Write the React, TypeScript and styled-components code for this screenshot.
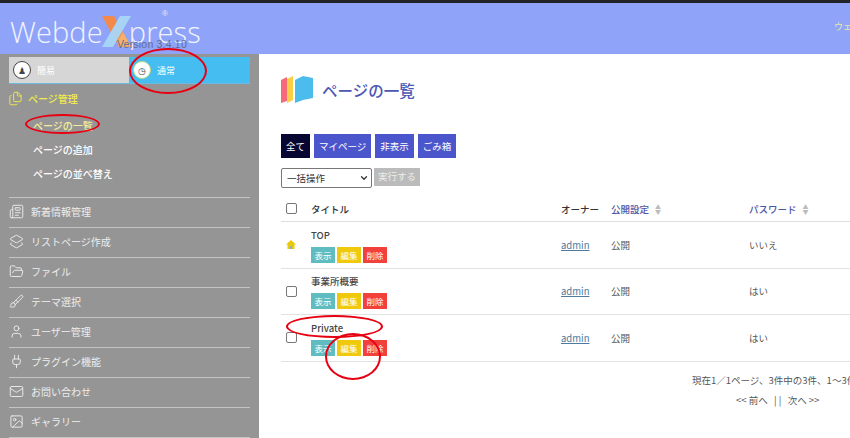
import React from "react";
import styled, { createGlobalStyle } from "styled-components";
import {
  Files,
  Newspaper,
  Layers2,
  FolderOpen,
  Brush,
  User,
  Plug,
  Mail,
  Image,
  ChevronDown,
} from "lucide-react";

const GlobalStyle = createGlobalStyle`
  html, body {
    margin: 0;
    padding: 0;
    width: 850px;
    height: 438px;
    overflow: hidden;
    background: #fff;
    font-family: "Noto Sans CJK JP", "Noto Sans", sans-serif;
  }
`;

const Page = styled.div`
  position: relative;
  width: 850px;
  height: 438px;
  overflow: hidden;
  display: flex;
  flex-direction: column;
`;

const TopEdge = styled.div`
  height: 3px;
  background: #222428;
`;

const Header = styled.header`
  height: 51px;
  background: #8fa3f8;
  display: flex;
  align-items: center;
  justify-content: space-between;
  padding-left: 10px;
`;

const Logo = styled.div`
  position: relative;
  display: flex;
  align-items: center;
  height: 40px;
  margin-top: 5px;
  font-family: "Open Sans", "Liberation Sans", sans-serif;
  font-weight: 300;
  font-size: 29px;
  letter-spacing: 0.1px;
  color: #f1f4ff;
`;

const LogoMark = styled.svg`
  width: 31px;
  height: 33px;
  margin: 0 -3px 0 -2px;
`;

const Version = styled.span`
  position: absolute;
  left: 107px;
  top: 27px;
  font-size: 10.5px;
  font-weight: 400;
  letter-spacing: 0.2px;
  color: #5f6c94;
  font-family: "Liberation Sans", sans-serif;
`;

const Registered = styled.span`
  position: absolute;
  left: 152px;
  top: -2px;
  font-size: 8px;
  font-weight: 400;
  color: #e8ecff;
  font-family: "Liberation Sans", sans-serif;
`;

const HeaderLink = styled.span`
  font-size: 9px;
  color: #e6e8a8;
  margin-right: -8px;
  margin-top: -4px;
  width: 24px;
  white-space: nowrap;
`;

const Body = styled.div`
  flex: 1;
  display: flex;
  min-height: 0;
`;

const Sidebar = styled.aside`
  width: 259px;
  flex: none;
  background: #959595;
  padding: 3px 9px 0;
  box-sizing: border-box;
`;

const ModeSwitch = styled.div`
  display: flex;
  height: 26px;
  border-bottom: 1px solid #6fb9de;
`;

const ModeItem = styled.div<{ $active?: boolean }>`
  width: ${(p) => (p.$active ? "121px" : "120px")};
  display: flex;
  align-items: center;
  gap: 6px;
  padding-left: 4px;
  font-size: 9px;
  color: #fff;
  background: ${(p) => (p.$active ? "#45bdf0" : "#d6d6d6")};
`;

const ModeIcon = styled.span<{ $active?: boolean }>`
  width: 16px;
  height: 16px;
  border-radius: 50%;
  background: #fff;
  border: 1px solid ${(p) => (p.$active ? "#b9d88a" : "#444")};
  display: flex;
  align-items: center;
  justify-content: center;
  font-size: 9px;
  line-height: 1;
  color: #444;
`;

const GroupTitle = styled.div`
  display: flex;
  align-items: center;
  gap: 5px;
  height: 16px;
  margin-top: 6px;
  font-size: 10px;
  font-weight: 500;
  color: #f2e94e;
  margin-left: -1px;
`;

const SubList = styled.div`
  display: flex;
  flex-direction: column;
  padding: 8px 0 11px 24px;
  border-bottom: 1px solid #c4c4c4;
`;

const SubItem = styled.div<{ $current?: boolean }>`
  height: 24px;
  line-height: 24px;
  font-size: 10px;
  font-weight: 500;
  color: ${(p) => (p.$current ? "#f3ee9a" : "#fff")};
`;

const NavItem = styled.div`
  height: 29px;
  display: flex;
  align-items: center;
  gap: 7px;
  padding-bottom: 3px;
  box-sizing: border-box;
  border-bottom: 1px solid #c4c4c4;
  margin-top: 1px;
  font-size: 10px;
  color: #ededed;

  svg {
    width: 15px;
    height: 15px;
    flex: none;
  }
`;

const Main = styled.main`
  flex: 1;
  min-width: 0;
  overflow: hidden;
  padding: 22px 0 0 22px;
`;

const TitleRow = styled.div`
  display: flex;
  align-items: center;
  gap: 9px;
  height: 28px;
`;

const PageTitle = styled.h1`
  margin: 0;
  font-size: 15.5px;
  font-weight: 500;
  color: #4c56b4;
`;

const Tabs = styled.div`
  display: flex;
  gap: 4px;
  margin-top: 30px;
`;

const Tab = styled.div<{ $active?: boolean }>`
  height: 24px;
  line-height: 24px;
  padding: 0 5px;
  font-size: 9.5px;
  color: #fff;
  background: ${(p) => (p.$active ? "#060630" : "#4c56cc")};
`;

const BulkRow = styled.div`
  display: flex;
  gap: 2px;
  margin-top: 10px;
  align-items: flex-start;
`;

const BulkSelect = styled.div`
  width: 91px;
  height: 20px;
  box-sizing: border-box;
  border: 1px solid #777;
  border-radius: 2px;
  padding: 0 2px 0 5px;
  display: flex;
  align-items: center;
  justify-content: space-between;
  font-size: 9.5px;
  color: #333;
`;

const ApplyButton = styled.div`
  width: 46px;
  height: 18px;
  line-height: 17px;
  text-align: center;
  font-size: 9.5px;
  color: #eee;
  background: #bbb;
`;

const Table = styled.div`
  width: 640px;
  margin-top: 11px;
  font-size: 9.5px;
  color: #444;
`;

const columns = "30px 250px 50px 138px 1fr";

const HeadRow = styled.div`
  display: grid;
  grid-template-columns: ${columns};
  height: 23px;
  align-items: center;
  padding-bottom: 3px;
  box-sizing: border-box;
  border-bottom: 1px solid #ddd;
`;

const Row = styled.div`
  display: grid;
  grid-template-columns: ${columns};
  height: 46.5px;
  box-sizing: border-box;
  align-items: center;
  border-bottom: 1px solid #e2e2e2;
`;

const HeadLabel = styled.span`
  color: #333;
  font-weight: 500;
`;

const SortLabel = styled.span`
  display: flex;
  align-items: center;
  gap: 6px;
  color: #4c56a4;
  font-weight: 500;
`;

const SortArrows = styled.span`
  font-size: 6px;
  line-height: 5px;
  color: #bbb;
  display: flex;
  flex-direction: column;
`;

const CheckCell = styled.span`
  padding-left: 5px;
`;

const Check = styled.span`
  display: block;
  width: 9px;
  height: 9px;
  border: 1px solid #777;
  border-radius: 2px;
`;

const TitleCell = styled.div`
  display: flex;
  flex-direction: column;
  gap: 3px;
`;

const RowName = styled.div`
  height: 17px;
  line-height: 17px;
  font-weight: 500;
  color: #444;
`;

const RowActions = styled.div`
  display: flex;
  gap: 2px;
`;

const Action = styled.span<{ $color: string }>`
  width: 24px;
  height: 16px;
  line-height: 16px;
  text-align: center;
  font-size: 8.5px;
  color: #fff;
  background: ${(p) => p.$color};
`;

const OwnerLink = styled.a`
  color: #4f7a9c;
  text-decoration: underline;
`;

const Value = styled.span`
  color: #555;
`;

const Summary = styled.div`
  margin: 11px 0 0 411px;
  height: 14px;
  line-height: 14px;
  font-size: 9.5px;
  color: #555;
  white-space: nowrap;
`;

const Pager = styled.div`
  margin: 6px 0 0 455px;
  height: 14px;
  line-height: 14px;
  font-size: 9.5px;
  color: #555;
  white-space: pre;
`;

const Oval = styled.span<{ $x: number; $y: number; $w: number; $h: number }>`
  position: absolute;
  left: ${(p) => p.$x}px;
  top: ${(p) => p.$y}px;
  width: ${(p) => p.$w}px;
  height: ${(p) => p.$h}px;
  box-sizing: border-box;
  border: 2.5px solid #e60012;
  border-radius: 50%;
`;

const navItems = [
  { label: "新着情報管理", icon: <Newspaper strokeWidth={1.5} /> },
  { label: "リストページ作成", icon: <Layers2 strokeWidth={1.5} /> },
  { label: "ファイル", icon: <FolderOpen strokeWidth={1.5} /> },
  { label: "テーマ選択", icon: <Brush strokeWidth={1.5} /> },
  { label: "ユーザー管理", icon: <User strokeWidth={1.5} /> },
  { label: "プラグイン機能", icon: <Plug strokeWidth={1.5} /> },
  { label: "お問い合わせ", icon: <Mail strokeWidth={1.5} /> },
  { label: "ギャラリー", icon: <Image strokeWidth={1.5} /> },
];

const rows = [
  { name: "TOP", home: true, password: "いいえ" },
  { name: "事業所概要", home: false, password: "はい" },
  { name: "Private", home: false, password: "はい" },
];

const PagesIcon = () => (
  <svg width="32" height="28" viewBox="0 0 32 28">
    <path d="M0 4l6-3v24l-6 2z" fill="#f46a78" />
    <path d="M6 3l6-3v24l-6 3z" fill="#f9cf45" />
    <path d="M14 4l8-4 10 2v20l-10 2-8 3z" fill="#4bbcec" />
  </svg>
);

const HomeIcon = () => (
  <svg width="10" height="9" viewBox="0 0 10 9">
    <path d="M5 0l5 4.5H8.500V9h-7V4.500H0z" fill="#e8c90f" />
    <path d="M4 6h2v3H4z" fill="#8fb0c0" />
  </svg>
);

const XMark = () => (
  <LogoMark viewBox="0 0 31 33">
    <path d="M1 1h12l17 31H18z" fill="#f28a4c" />
    <path d="M19 1h11L12 32H1z" fill="#a9d6f7" opacity="0.95" />
    <path d="M18 32h12L22 17l-6 10z" fill="#f7b06a" />
  </LogoMark>
);

export default function App() {
  return (
    <Page>
      <GlobalStyle />
      <TopEdge />
      <Header>
        <Logo>
          Webde
          <XMark />
          press
          <Version>Version 3.4.10</Version>
          <Registered>®</Registered>
        </Logo>
        <HeaderLink>ウェブ</HeaderLink>
      </Header>
      <Body>
        <Sidebar>
          <ModeSwitch>
            <ModeItem>
              <ModeIcon>♟</ModeIcon>
              簡易
            </ModeItem>
            <ModeItem $active>
              <ModeIcon $active>◷</ModeIcon>
              通常
            </ModeItem>
          </ModeSwitch>
          <GroupTitle>
            <Files size={15} strokeWidth={1.5} />
            ページ管理
          </GroupTitle>
          <SubList>
            <SubItem $current>ページの一覧</SubItem>
            <SubItem>ページの追加</SubItem>
            <SubItem>ページの並べ替え</SubItem>
          </SubList>
          {navItems.map((item) => (
            <NavItem key={item.label}>
              {item.icon}
              {item.label}
            </NavItem>
          ))}
        </Sidebar>
        <Main>
          <TitleRow>
            <PagesIcon />
            <PageTitle>ページの一覧</PageTitle>
          </TitleRow>
          <Tabs>
            <Tab $active>全て</Tab>
            <Tab>マイページ</Tab>
            <Tab>非表示</Tab>
            <Tab>ごみ箱</Tab>
          </Tabs>
          <BulkRow>
            <BulkSelect>
              一括操作
              <ChevronDown size={10} strokeWidth={3} />
            </BulkSelect>
            <ApplyButton>実行する</ApplyButton>
          </BulkRow>
          <Table>
            <HeadRow>
              <CheckCell>
                <Check />
              </CheckCell>
              <HeadLabel>タイトル</HeadLabel>
              <HeadLabel>オーナー</HeadLabel>
              <SortLabel>
                公開設定
                <SortArrows>
                  <span>▲</span>
                  <span>▼</span>
                </SortArrows>
              </SortLabel>
              <SortLabel>
                パスワード
                <SortArrows>
                  <span>▲</span>
                  <span>▼</span>
                </SortArrows>
              </SortLabel>
            </HeadRow>
            {rows.map((row) => (
              <Row key={row.name}>
                <CheckCell>{row.home ? <HomeIcon /> : <Check />}</CheckCell>
                <TitleCell>
                  <RowName>{row.name}</RowName>
                  <RowActions>
                    <Action $color="#5fbcc0">表示</Action>
                    <Action $color="#f0c90c">編集</Action>
                    <Action $color="#f2403a">削除</Action>
                  </RowActions>
                </TitleCell>
                <OwnerLink>admin</OwnerLink>
                <Value>公開</Value>
                <Value>{row.password}</Value>
              </Row>
            ))}
          </Table>
          <Summary>現在1／1ページ、3件中の3件、1～3件を表示</Summary>
          <Pager>{"<< 前へ   | |   次へ >>"}</Pager>
        </Main>
      </Body>
      <Oval $x={129} $y={48} $w={78} $h={46} />
      <Oval $x={25} $y={114} $w={75} $h={20} />
      <Oval $x={286} $y={315} $w={97} $h={23} />
      <Oval $x={325} $y={333} $w={56} $h={47} />
    </Page>
  );
}
